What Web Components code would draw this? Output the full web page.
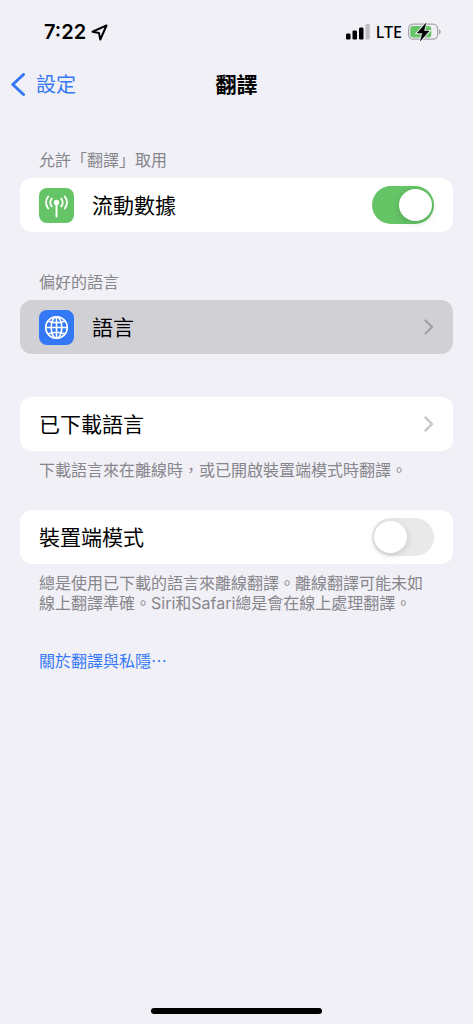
<!DOCTYPE html>
<html lang="zh-Hant-HK">
<head>
<meta charset="utf-8">
<meta name="viewport" content="width=device-width, initial-scale=1">
<title>翻譯</title>
<style>
  html { height: 100%; }
  body {
    margin: 0;
    min-height: 100%;
    display: flex;
    background: #f1f0f6;
    color: #000;
    font-family: Inter, "Noto Sans CJK TC", sans-serif;
    --blue: #3478f6;
    --green: #65c466;
    --muted: #87868c;
  }
</style>
</head>
<body>
<settings-screen></settings-screen>
<script>
function define(name, html, setup) {
  const template = document.createElement('template');
  template.innerHTML = html;
  customElements.define(name, class extends HTMLElement {
    connectedCallback() {
      if (this.shadowRoot) return;
      this.attachShadow({ mode: 'open' }).append(template.content.cloneNode(true));
      if (setup) setup(this, this.shadowRoot);
    }
  });
}

define('status-bar', `
  <style>
    :host { display: flex; align-items: center; justify-content: space-between; height: 64px; padding: 0 32px 0 44px; }
    div { display: flex; align-items: center; }
    .left { gap: 5px; }
    .right { gap: 6px; }
    time { font-size: 20px; font-weight: 600; line-height: 24px; }
    .net { font-family: "Noto Sans", sans-serif; font-size: 16px; font-weight: 500; line-height: 24px; }
    svg { display: block; }
  </style>
  <div class="left">
    <time>7:22</time>
    <svg width="17" height="17" viewBox="0 0 17 17" fill="none" stroke="#000" stroke-width="2" stroke-linejoin="round" aria-hidden="true"><path d="M15.500 1.500 1.500 7.700 8 9l1.300 6.500Z"/></svg>
  </div>
  <div class="right">
    <svg width="24" height="16" viewBox="0 0 24 16" aria-hidden="true">
      <rect x="0" y="9.500" width="4.500" height="6" rx="1.200"/><rect x="6.500" y="6.500" width="4.500" height="9" rx="1.200"/><rect x="13" y="3.500" width="4.500" height="12" rx="1.200"/><rect x="19.500" y="0" width="4.300" height="15.500" rx="1.200" fill="#bfbfc3"/>
    </svg>
    <span class="net">LTE</span>
    <svg width="33" height="18" viewBox="0 0 33 18" aria-hidden="true">
      <rect x=".6" y="1.200" width="29" height="15" rx="4.600" fill="none" stroke="#a5a5a9" stroke-width="1.200"/>
      <rect x="2.300" y="3" width="21" height="11.500" rx="3" fill="#65c466"/>
      <path d="M31 6.200c2.300.9 2.300 4.300 0 5.200z" fill="#a5a5a9"/>
      <path d="M17.800.3 9.300 10h5.200l-2 7.700L21 8.100h-5.200z" stroke="#f1f0f6" stroke-width="2.400"/>
      <path d="M17.800.3 9.300 10h5.200l-2 7.700L21 8.100h-5.200z" stroke="#000" stroke-width=".6" stroke-linejoin="round"/>
    </svg>
  </div>`);

define('nav-bar', `
  <style>
    :host { display: grid; grid-template-columns: 1fr auto 1fr; align-items: center; height: 42px; padding: 0 10px; }
    a { display: flex; align-items: center; gap: 10px; color: var(--blue); text-decoration: none; font-size: 20px; line-height: 24px; }
    h1 { margin: 0; font-size: 21px; font-weight: 700; line-height: 24px; }
    svg { display: block; }
  </style>
  <a href="#settings">
    <svg width="16" height="24" viewBox="0 0 16 24" fill="none" stroke="currentColor" stroke-width="3" stroke-linecap="round" stroke-linejoin="round" aria-hidden="true"><path d="M13.500 1.500 2.800 11.500l10.700 10"/></svg>
    <slot name="back"></slot>
  </a>
  <h1><slot></slot></h1>`);

define('settings-group', `
  <style>
    :host { display: block; padding: 0 20px; color: #000; }
    .note { padding: 0 19px; color: var(--muted); font-size: 16px; line-height: 20px; }
    .header { padding-bottom: 8px; }
    .footer { padding-top: 9px; }
    :host(:not([has-header])) .header, :host(:not([has-footer])) .footer { display: none; }
    .card { border-radius: 12px; overflow: hidden; background: #fff; }
  </style>
  <div class="note header"><slot name="header"></slot></div>
  <div class="card"><slot></slot></div>
  <div class="note footer"><slot name="footer"></slot></div>`,
  (host) => {
    host.toggleAttribute('has-header', !!host.querySelector('[slot=header]'));
    host.toggleAttribute('has-footer', !!host.querySelector('[slot=footer]'));
  });

const rowStyle = `
  :host { display: block; }
  .row { box-sizing: border-box; display: flex; align-items: center; width: 100%; height: 54px; padding: 0 19px; color: #000; font-size: 21px; line-height: 28px; text-decoration: none; }
  .label { flex: 1; padding-top: 2px; }
  ::slotted([slot=icon]) { margin-right: 18px; }`;

define('switch-row', `
  <style>${rowStyle}
    input { appearance: none; margin: 0; width: 62px; height: 38px; padding: 3px 2px; box-sizing: border-box; border-radius: 19px; background: #e9e9ea; display: flex; }
    input::before { content: ""; width: 33px; height: 32px; border-radius: 50%; background: #fff; box-shadow: 0 2px 7px rgba(0,0,0,.15); }
    input:checked { background: var(--green); justify-content: flex-end; }
  </style>
  <label class="row"><slot name="icon"></slot><span class="label"><slot></slot></span><input type="checkbox" role="switch"></label>`,
  (host, root) => { root.querySelector('input').checked = host.hasAttribute('checked'); });

define('link-row', `
  <style>${rowStyle}
    :host([pressed]) { background: #d1d0d5; --chevron: #a3a2a7; }
    svg { display: block; }
  </style>
  <a class="row" href="#"><slot name="icon"></slot><span class="label"><slot></slot></span>
    <svg width="11" height="16" viewBox="0 0 11 16" fill="none" stroke="var(--chevron, #c4c4c7)" stroke-width="2.400" stroke-linecap="round" stroke-linejoin="round" aria-hidden="true"><path d="M2.500 1.500 9 8l-6.500 6.500"/></svg>
  </a>`);

define('app-icon', `
  <style>
    :host { display: block; width: 35px; height: 35px; border-radius: 8px; background: var(--green); }
    :host([kind=globe]) { background: var(--blue); }
    :host([kind=globe]) .antenna, :host([kind=antenna]) .globe { display: none; }
    svg { display: block; }
  </style>
  <svg class="antenna" width="35" height="35" viewBox="0 0 35 35" fill="none" stroke="#fff" stroke-width="1.900" stroke-linecap="round" aria-hidden="true">
    <circle cx="17.500" cy="14.500" r="2.700" fill="#fff" stroke="none"/>
    <path d="M17.500 15v13.500M12.800 10.600a6 6 0 0 0 0 7.800M22.200 10.600a6 6 0 0 1 0 7.800M9.200 8.500a9.500 9.500 0 0 0 0 12M25.800 8.500a9.500 9.500 0 0 1 0 12"/>
  </svg>
  <svg class="globe" width="35" height="35" viewBox="0 0 35 35" fill="none" stroke="#fff" stroke-width="1.600" aria-hidden="true">
    <circle cx="17.500" cy="17.500" r="10.800"/><ellipse cx="17.500" cy="17.500" rx="5.300" ry="10.800"/>
    <path d="M17.500 6.700v21.600M6.700 17.500h21.600M9 11q8.500 3.600 17 0M9 24q8.500-3.600 17 0"/>
  </svg>`);

define('home-indicator', `
  <style>
    :host { display: block; width: 36%; height: 6px; border-radius: 3px; background: #000; margin: auto auto 10px; }
  </style>`);

define('settings-screen', `
  <style>
    :host { flex: 1; display: flex; flex-direction: column; }
    main { display: flex; flex-direction: column; padding-top: 44px; }
    .languages { margin-top: 40px; }
    .downloaded { margin-top: 43px; }
    .device { margin-top: 30px; }
    .about { align-self: flex-start; margin: 38px 39px; color: var(--blue); font-size: 16px; line-height: 20px; text-decoration: none; }
    p, h2 { margin: 0; font-size: inherit; font-weight: 400; }
  </style>
  <status-bar></status-bar>
  <nav-bar><span slot="back">設定</span>翻譯</nav-bar>
  <main>
    <settings-group>
      <h2 slot="header">允許「翻譯」取用</h2>
      <switch-row checked><app-icon slot="icon" kind="antenna"></app-icon>流動數據</switch-row>
    </settings-group>
    <settings-group class="languages">
      <h2 slot="header">偏好的語言</h2>
      <link-row pressed><app-icon slot="icon" kind="globe"></app-icon>語言</link-row>
    </settings-group>
    <settings-group class="downloaded">
      <link-row>已下載語言</link-row>
      <p slot="footer">下載語言來在離線時，或已開啟裝置端模式時翻譯。</p>
    </settings-group>
    <settings-group class="device">
      <switch-row>裝置端模式</switch-row>
      <p slot="footer">總是使用已下載的語言來離線翻譯。離線翻譯可能未如線上翻譯準確。Siri和Safari總是會在線上處理翻譯。</p>
    </settings-group>
    <a class="about" href="#privacy">關於翻譯與私隱⋯</a>
  </main>
  <home-indicator></home-indicator>`);
</script>
</body>
</html>
